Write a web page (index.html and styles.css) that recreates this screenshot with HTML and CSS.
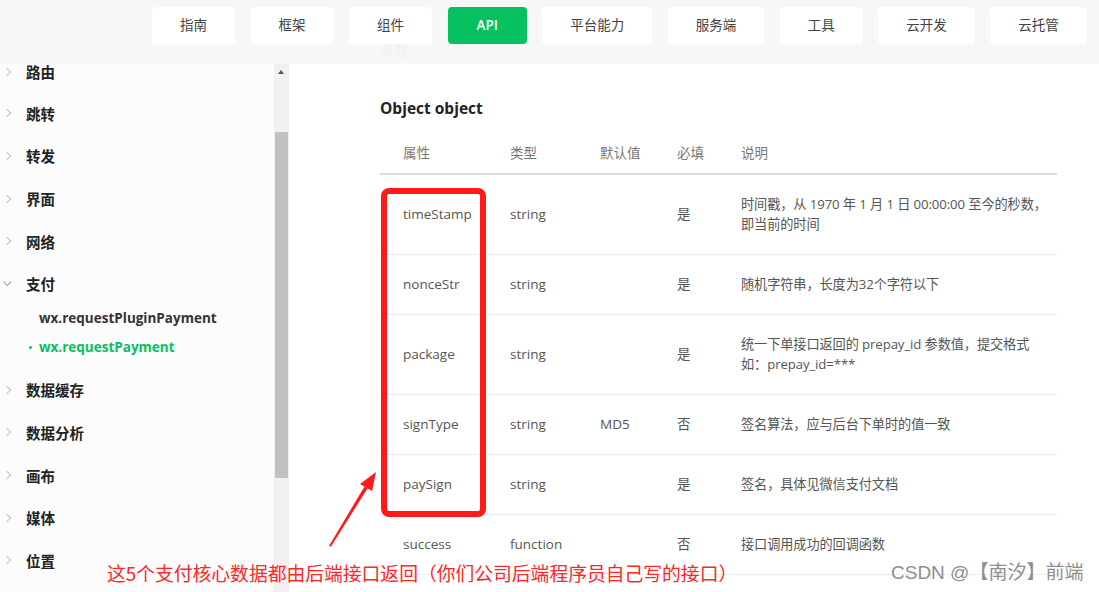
FILE: index.html
```html
<!DOCTYPE html>
<html lang="zh-CN">
<head>
    <meta charset="UTF-8">
    <meta name="viewport" content="width=device-width, initial-scale=1.0">
    <title>wx.requestPayment</title>
    <link rel="stylesheet" href="styles.css">
</head>
<body>
    <header class="topbar">
        <span class="ghost">参数</span>
        <nav class="nav">
            <a class="nav-item">指南</a>
            <a class="nav-item">框架</a>
            <a class="nav-item">组件</a>
            <a class="nav-item active">API</a>
            <a class="nav-item">平台能力</a>
            <a class="nav-item">服务端</a>
            <a class="nav-item">工具</a>
            <a class="nav-item">云开发</a>
            <a class="nav-item">云托管</a>
        </nav>
    </header>

    <div class="page">
        <aside class="sidebar">
            <ul class="menu">
                <li class="menu-item"><span class="chev"></span>路由</li>
                <li class="menu-item"><span class="chev"></span>跳转</li>
                <li class="menu-item"><span class="chev"></span>转发</li>
                <li class="menu-item"><span class="chev"></span>界面</li>
                <li class="menu-item"><span class="chev"></span>网络</li>
                <li class="menu-item open"><span class="chev down"></span>支付</li>
                <li class="submenu">
                    <div class="sub-item">wx.requestPluginPayment</div>
                    <div class="sub-item current">wx.requestPayment</div>
                </li>
                <li class="menu-item"><span class="chev"></span>数据缓存</li>
                <li class="menu-item"><span class="chev"></span>数据分析</li>
                <li class="menu-item"><span class="chev"></span>画布</li>
                <li class="menu-item"><span class="chev"></span>媒体</li>
                <li class="menu-item"><span class="chev"></span>位置</li>
            </ul>
        </aside>
        <div class="scrollbar">
            <span class="scroll-up"></span>
            <span class="thumb"></span>
        </div>

        <main class="content">
            <h3 class="title">Object object</h3>
            <table class="params">
                <thead>
                    <tr>
                        <th class="c-name">属性</th>
                        <th class="c-type">类型</th>
                        <th class="c-def">默认值</th>
                        <th class="c-req">必填</th>
                        <th class="c-desc">说明</th>
                    </tr>
                </thead>
                <tbody>
                    <tr>
                        <td>timeStamp</td>
                        <td>string</td>
                        <td></td>
                        <td>是</td>
                        <td class="desc">时间戳，从 1970 年 1 月 1 日 00:00:00 至今的秒数，即当前的时间</td>
                    </tr>
                    <tr>
                        <td>nonceStr</td>
                        <td>string</td>
                        <td></td>
                        <td>是</td>
                        <td class="desc">随机字符串，长度为32个字符以下</td>
                    </tr>
                    <tr>
                        <td>package</td>
                        <td>string</td>
                        <td></td>
                        <td>是</td>
                        <td class="desc">统一下单接口返回的 prepay_id 参数值，提交格式如：prepay_id=***</td>
                    </tr>
                    <tr>
                        <td>signType</td>
                        <td>string</td>
                        <td>MD5</td>
                        <td>否</td>
                        <td class="desc">签名算法，应与后台下单时的值一致</td>
                    </tr>
                    <tr>
                        <td>paySign</td>
                        <td>string</td>
                        <td></td>
                        <td>是</td>
                        <td class="desc">签名，具体见微信支付文档</td>
                    </tr>
                    <tr>
                        <td>success</td>
                        <td>function</td>
                        <td></td>
                        <td>否</td>
                        <td class="desc">接口调用成功的回调函数</td>
                    </tr>
                </tbody>
            </table>
        </main>
    </div>

    <!-- screenshot annotation -->
    <svg class="annotation" width="1099" height="592" viewBox="0 0 1099 592">
        <rect x="384" y="191" width="99" height="323" rx="5" fill="none" stroke="#ff1a1a" stroke-width="6"/>
        <polygon points="329,546 331,546.5 367.5,488.5 364.5,486.5" fill="#ff1a1a"/>
        <polygon points="376,472 372,491 360,484" fill="#ff1a1a"/>
    </svg>
    <p class="note">这5个支付核心数据都由后端接口返回（你们公司后端程序员自己写的接口）</p>
    <span class="watermark">CSDN @【南汐】前端</span>
</body>
</html>
```

FILE: styles.css
```css
* {
    box-sizing: border-box;
}

body {
    margin: 0;
    height: 592px;
    overflow: hidden;
    position: relative;
    background-color: #fff;
    font-family: "Open Sans", "Noto Sans CJK SC", sans-serif;
    color: #333;
}

.topbar {
    position: relative;
    height: 64px;
    background-color: #f7f7f7;
}

.ghost {
    position: absolute;
    left: 380px;
    top: 40px;
    font-size: 14px;
    color: #f0f0f0;
}

.nav {
    display: flex;
    gap: 15.5px;
    padding: 7px 0 0 152px;
}

.nav-item {
    height: 37px;
    line-height: 37px;
    padding: 0 28px;
    background-color: #fff;
    border-radius: 4px;
    font-size: 13.5px;
    color: #444;
}

.nav-item.active {
    background-color: #07c160;
    color: #fff;
    font-weight: 600;
    padding: 0 29px;
}

.page {
    display: flex;
    height: 528px;
}

.sidebar {
    width: 274px;
    background-color: #fcfcfc;
}

.menu {
    list-style: none;
    margin: 0;
    padding: 0;
}

.menu-item {
    display: flex;
    align-items: center;
    height: 42.6px;
    padding-left: 4px;
    font-size: 14.5px;
    font-weight: 700;
    color: #222;
}

/* first entry is scrolled partly out of view */
.menu-item:first-child {
    height: 28.1px;
    align-items: flex-start;
    line-height: 18px;
}

.menu-item:first-child .chev {
    margin-top: 5px;
}

.chev {
    width: 6px;
    height: 6px;
    margin-right: 16px;
    border-right: 1.5px solid #c4c4c4;
    border-bottom: 1.5px solid #c4c4c4;
    transform: rotate(-45deg);
}

.chev.down {
    transform: rotate(45deg) translate(-2px, -1px);
    margin-left: 1px;
    margin-right: 15px;
    border-color: #999;
}

.submenu {
    margin: -1.5px 0 7px;
}

.sub-item {
    height: 29px;
    line-height: 29px;
    padding-left: 39px;
    font-size: 13.5px;
    font-weight: 700;
    color: #333;
    position: relative;
}

.sub-item.current {
    color: #07c160;
}

.sub-item.current::before {
    content: "";
    position: absolute;
    left: 29px;
    top: 13px;
    width: 3px;
    height: 3px;
    border-radius: 50%;
    background-color: #07c160;
}

.scrollbar {
    width: 15px;
    background-color: #f1f1f1;
    position: relative;
}

.scroll-up {
    position: absolute;
    left: 4px;
    top: 6px;
    border-left: 3.5px solid transparent;
    border-right: 3.5px solid transparent;
    border-bottom: 4px solid #555;
}

.thumb {
    position: absolute;
    left: 1px;
    right: 1px;
    top: 68px;
    height: 346px;
    background-color: #c1c1c1;
}

.content {
    flex: 1;
    padding: 32px 0 0 91px;
}

.title {
    margin: 0 0 13px;
    height: 24px;
    line-height: 24px;
    font-size: 15.5px;
    font-weight: 700;
    color: #222;
}

.params {
    width: 677px;
    border-collapse: collapse;
    font-size: 13.5px;
    color: #555;
}

.params th {
    height: 41px;
    padding: 0 0 2px 23px;
    text-align: left;
    font-weight: 400;
    color: #777;
    border-bottom: 2px solid #dcdcdc;
}

.params td {
    padding: 19px 6px 20px 23px;
    line-height: 20px;
    vertical-align: middle;
    border-bottom: 1px solid #ececec;
}

.params td.desc {
    padding-right: 10px;
    font-size: 13.2px;
    letter-spacing: -0.1px;
}

.c-name { width: 107px; }
.c-type { width: 90px; }
.c-def { width: 77px; }
.c-req { width: 64px; }

.annotation {
    position: absolute;
    left: 0;
    top: 0;
    pointer-events: none;
}

.note {
    position: absolute;
    left: 107px;
    top: 560px;
    margin: 0;
    font-family: "Noto Sans CJK SC", sans-serif;
    font-size: 18.8px;
    line-height: 26px;
    color: #ff2626;
}

.watermark {
    position: absolute;
    left: 891px;
    top: 560px;
    font-family: "Liberation Sans", "Noto Sans CJK SC", sans-serif;
    font-size: 19px;
    line-height: 26px;
    color: #8e8e8e;
}
```
